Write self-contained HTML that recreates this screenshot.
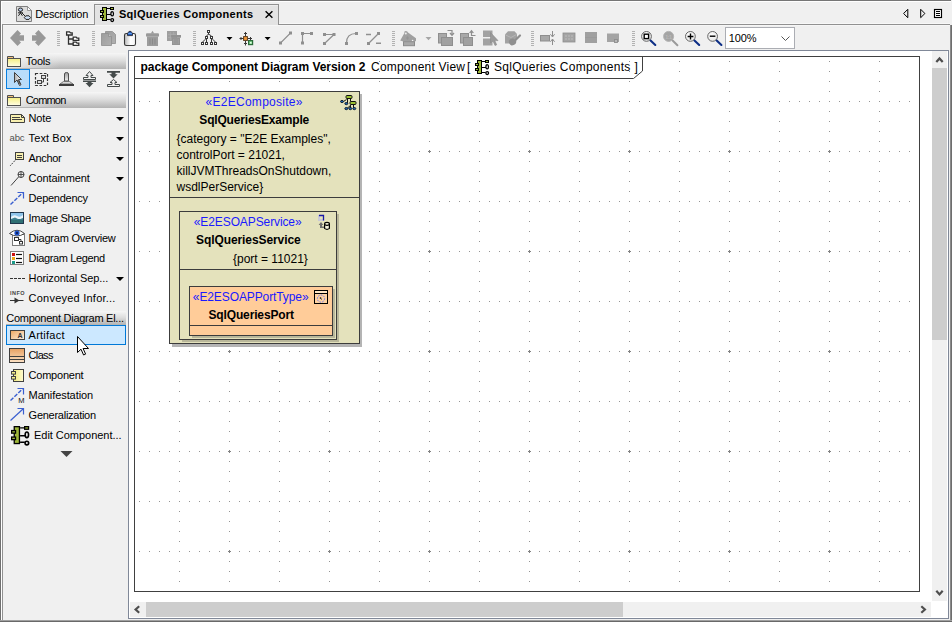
<!DOCTYPE html>
<html><head><meta charset="utf-8"><title>SqlQueries Components</title>
<style>html,body{margin:0;padding:0;background:#f0f0f0;overflow:hidden}svg{display:block;font-family:"Liberation Sans", sans-serif}text{white-space:pre}</style></head>
<body>
<svg width="952" height="622" viewBox="0 0 952 622">
<rect x="0" y="0" width="952" height="622" fill="#f0f0f0" />
<rect x="0" y="0" width="951" height="1" fill="#767676" />
<rect x="0" y="0" width="1" height="622" fill="#707070" />
<rect x="1" y="1" width="950" height="1" fill="#ffffff" />
<rect x="1" y="1" width="1" height="619" fill="#ffffff" />
<rect x="2" y="24" width="1" height="596" fill="#919191" />
<rect x="950" y="25" width="1" height="596" fill="#8a8a8a" />
<rect x="951" y="25" width="1" height="597" fill="#6e6e6e" />
<rect x="0" y="620" width="952" height="1" fill="#a0a0a0" />
<rect x="0" y="621" width="952" height="1" fill="#696969" />
<rect x="3" y="24" width="92" height="1" fill="#919191" />
<rect x="278" y="24" width="672" height="1" fill="#919191" />
<rect x="95" y="5" width="183" height="20" fill="#e3e3e3" />
<rect x="94" y="4" width="185" height="1" fill="#919191" />
<rect x="94" y="4" width="1" height="21" fill="#919191" />
<rect x="278" y="4" width="1" height="21" fill="#919191" />
<rect x="95" y="5" width="183" height="1" fill="#ededed" />
<rect x="3" y="23" width="91" height="1" fill="#f8f8f8" />
<rect x="279" y="23" width="671" height="1" fill="#f8f8f8" />
<rect x="3" y="25" width="947" height="1" fill="#f6f6f6" />
<path d="M265.6 11.3 L272.4 17.7 M272.4 11.3 L265.6 17.7" stroke="#000" stroke-width="1.45" fill="none"/>
<path d="M907.8 9.3 L903.6 13.5 L907.8 17.7 Z" fill="none" stroke="#000" stroke-width="1"/>
<path d="M920.7 9.3 L924.9 13.5 L920.7 17.7 Z" fill="none" stroke="#000" stroke-width="1"/>
<rect x="934.5" y="9.5" width="7" height="8" fill="#fff" stroke="#000" stroke-width="1.15"/>
<path d="M936 11.5h4M936 13.5h4M936 15.5h4" stroke="#000" stroke-width="1"/>
<rect x="128" y="50" width="821" height="569" fill="#808898" />
<rect x="129" y="51" width="819" height="567" fill="#ffffff" />
<rect x="134" y="56" width="786" height="536" fill="#404040" />
<rect x="135" y="57" width="784" height="534" fill="#ffffff" />
<path d="M179 61h1v1h-1zM229 61h1v1h-1zM279 61h1v1h-1zM329 61h1v1h-1zM379 61h1v1h-1zM429 61h1v1h-1zM479 61h1v1h-1zM529 61h1v1h-1zM579 61h1v1h-1zM629 61h1v1h-1zM679 61h1v1h-1zM729 61h1v1h-1zM779 61h1v1h-1zM829 61h1v1h-1zM879 61h1v1h-1zM179 71h1v1h-1zM229 71h1v1h-1zM279 71h1v1h-1zM329 71h1v1h-1zM379 71h1v1h-1zM429 71h1v1h-1zM479 71h1v1h-1zM529 71h1v1h-1zM579 71h1v1h-1zM629 71h1v1h-1zM679 71h1v1h-1zM729 71h1v1h-1zM779 71h1v1h-1zM829 71h1v1h-1zM879 71h1v1h-1zM179 81h1v1h-1zM229 81h1v1h-1zM279 81h1v1h-1zM329 81h1v1h-1zM379 81h1v1h-1zM429 81h1v1h-1zM479 81h1v1h-1zM529 81h1v1h-1zM579 81h1v1h-1zM629 81h1v1h-1zM679 81h1v1h-1zM729 81h1v1h-1zM779 81h1v1h-1zM829 81h1v1h-1zM879 81h1v1h-1zM179 91h1v1h-1zM229 91h1v1h-1zM279 91h1v1h-1zM329 91h1v1h-1zM379 91h1v1h-1zM429 91h1v1h-1zM479 91h1v1h-1zM529 91h1v1h-1zM579 91h1v1h-1zM629 91h1v1h-1zM679 91h1v1h-1zM729 91h1v1h-1zM779 91h1v1h-1zM829 91h1v1h-1zM879 91h1v1h-1zM139 101h1v1h-1zM149 101h1v1h-1zM159 101h1v1h-1zM169 101h1v1h-1zM179 101h1v1h-1zM189 101h1v1h-1zM199 101h1v1h-1zM209 101h1v1h-1zM219 101h1v1h-1zM229 101h1v1h-1zM239 101h1v1h-1zM249 101h1v1h-1zM259 101h1v1h-1zM269 101h1v1h-1zM279 101h1v1h-1zM289 101h1v1h-1zM299 101h1v1h-1zM309 101h1v1h-1zM319 101h1v1h-1zM329 101h1v1h-1zM339 101h1v1h-1zM349 101h1v1h-1zM359 101h1v1h-1zM369 101h1v1h-1zM379 101h1v1h-1zM389 101h1v1h-1zM399 101h1v1h-1zM409 101h1v1h-1zM419 101h1v1h-1zM429 101h1v1h-1zM439 101h1v1h-1zM449 101h1v1h-1zM459 101h1v1h-1zM469 101h1v1h-1zM479 101h1v1h-1zM489 101h1v1h-1zM499 101h1v1h-1zM509 101h1v1h-1zM519 101h1v1h-1zM529 101h1v1h-1zM539 101h1v1h-1zM549 101h1v1h-1zM559 101h1v1h-1zM569 101h1v1h-1zM579 101h1v1h-1zM589 101h1v1h-1zM599 101h1v1h-1zM609 101h1v1h-1zM619 101h1v1h-1zM629 101h1v1h-1zM639 101h1v1h-1zM649 101h1v1h-1zM659 101h1v1h-1zM669 101h1v1h-1zM679 101h1v1h-1zM689 101h1v1h-1zM699 101h1v1h-1zM709 101h1v1h-1zM719 101h1v1h-1zM729 101h1v1h-1zM739 101h1v1h-1zM749 101h1v1h-1zM759 101h1v1h-1zM769 101h1v1h-1zM779 101h1v1h-1zM789 101h1v1h-1zM799 101h1v1h-1zM809 101h1v1h-1zM819 101h1v1h-1zM829 101h1v1h-1zM839 101h1v1h-1zM849 101h1v1h-1zM859 101h1v1h-1zM869 101h1v1h-1zM879 101h1v1h-1zM889 101h1v1h-1zM899 101h1v1h-1zM909 101h1v1h-1zM179 111h1v1h-1zM229 111h1v1h-1zM279 111h1v1h-1zM329 111h1v1h-1zM379 111h1v1h-1zM429 111h1v1h-1zM479 111h1v1h-1zM529 111h1v1h-1zM579 111h1v1h-1zM629 111h1v1h-1zM679 111h1v1h-1zM729 111h1v1h-1zM779 111h1v1h-1zM829 111h1v1h-1zM879 111h1v1h-1zM179 121h1v1h-1zM229 121h1v1h-1zM279 121h1v1h-1zM329 121h1v1h-1zM379 121h1v1h-1zM429 121h1v1h-1zM479 121h1v1h-1zM529 121h1v1h-1zM579 121h1v1h-1zM629 121h1v1h-1zM679 121h1v1h-1zM729 121h1v1h-1zM779 121h1v1h-1zM829 121h1v1h-1zM879 121h1v1h-1zM179 131h1v1h-1zM229 131h1v1h-1zM279 131h1v1h-1zM329 131h1v1h-1zM379 131h1v1h-1zM429 131h1v1h-1zM479 131h1v1h-1zM529 131h1v1h-1zM579 131h1v1h-1zM629 131h1v1h-1zM679 131h1v1h-1zM729 131h1v1h-1zM779 131h1v1h-1zM829 131h1v1h-1zM879 131h1v1h-1zM179 141h1v1h-1zM229 141h1v1h-1zM279 141h1v1h-1zM329 141h1v1h-1zM379 141h1v1h-1zM429 141h1v1h-1zM479 141h1v1h-1zM529 141h1v1h-1zM579 141h1v1h-1zM629 141h1v1h-1zM679 141h1v1h-1zM729 141h1v1h-1zM779 141h1v1h-1zM829 141h1v1h-1zM879 141h1v1h-1zM139 151h1v1h-1zM149 151h1v1h-1zM159 151h1v1h-1zM169 151h1v1h-1zM179 151h1v1h-1zM189 151h1v1h-1zM199 151h1v1h-1zM209 151h1v1h-1zM219 151h1v1h-1zM229 151h1v1h-1zM239 151h1v1h-1zM249 151h1v1h-1zM259 151h1v1h-1zM269 151h1v1h-1zM279 151h1v1h-1zM289 151h1v1h-1zM299 151h1v1h-1zM309 151h1v1h-1zM319 151h1v1h-1zM329 151h1v1h-1zM339 151h1v1h-1zM349 151h1v1h-1zM359 151h1v1h-1zM369 151h1v1h-1zM379 151h1v1h-1zM389 151h1v1h-1zM399 151h1v1h-1zM409 151h1v1h-1zM419 151h1v1h-1zM429 151h1v1h-1zM439 151h1v1h-1zM449 151h1v1h-1zM459 151h1v1h-1zM469 151h1v1h-1zM479 151h1v1h-1zM489 151h1v1h-1zM499 151h1v1h-1zM509 151h1v1h-1zM519 151h1v1h-1zM529 151h1v1h-1zM539 151h1v1h-1zM549 151h1v1h-1zM559 151h1v1h-1zM569 151h1v1h-1zM579 151h1v1h-1zM589 151h1v1h-1zM599 151h1v1h-1zM609 151h1v1h-1zM619 151h1v1h-1zM629 151h1v1h-1zM639 151h1v1h-1zM649 151h1v1h-1zM659 151h1v1h-1zM669 151h1v1h-1zM679 151h1v1h-1zM689 151h1v1h-1zM699 151h1v1h-1zM709 151h1v1h-1zM719 151h1v1h-1zM729 151h1v1h-1zM739 151h1v1h-1zM749 151h1v1h-1zM759 151h1v1h-1zM769 151h1v1h-1zM779 151h1v1h-1zM789 151h1v1h-1zM799 151h1v1h-1zM809 151h1v1h-1zM819 151h1v1h-1zM829 151h1v1h-1zM839 151h1v1h-1zM849 151h1v1h-1zM859 151h1v1h-1zM869 151h1v1h-1zM879 151h1v1h-1zM889 151h1v1h-1zM899 151h1v1h-1zM909 151h1v1h-1zM179 161h1v1h-1zM229 161h1v1h-1zM279 161h1v1h-1zM329 161h1v1h-1zM379 161h1v1h-1zM429 161h1v1h-1zM479 161h1v1h-1zM529 161h1v1h-1zM579 161h1v1h-1zM629 161h1v1h-1zM679 161h1v1h-1zM729 161h1v1h-1zM779 161h1v1h-1zM829 161h1v1h-1zM879 161h1v1h-1zM179 171h1v1h-1zM229 171h1v1h-1zM279 171h1v1h-1zM329 171h1v1h-1zM379 171h1v1h-1zM429 171h1v1h-1zM479 171h1v1h-1zM529 171h1v1h-1zM579 171h1v1h-1zM629 171h1v1h-1zM679 171h1v1h-1zM729 171h1v1h-1zM779 171h1v1h-1zM829 171h1v1h-1zM879 171h1v1h-1zM179 181h1v1h-1zM229 181h1v1h-1zM279 181h1v1h-1zM329 181h1v1h-1zM379 181h1v1h-1zM429 181h1v1h-1zM479 181h1v1h-1zM529 181h1v1h-1zM579 181h1v1h-1zM629 181h1v1h-1zM679 181h1v1h-1zM729 181h1v1h-1zM779 181h1v1h-1zM829 181h1v1h-1zM879 181h1v1h-1zM179 191h1v1h-1zM229 191h1v1h-1zM279 191h1v1h-1zM329 191h1v1h-1zM379 191h1v1h-1zM429 191h1v1h-1zM479 191h1v1h-1zM529 191h1v1h-1zM579 191h1v1h-1zM629 191h1v1h-1zM679 191h1v1h-1zM729 191h1v1h-1zM779 191h1v1h-1zM829 191h1v1h-1zM879 191h1v1h-1zM139 201h1v1h-1zM149 201h1v1h-1zM159 201h1v1h-1zM169 201h1v1h-1zM179 201h1v1h-1zM189 201h1v1h-1zM199 201h1v1h-1zM209 201h1v1h-1zM219 201h1v1h-1zM229 201h1v1h-1zM239 201h1v1h-1zM249 201h1v1h-1zM259 201h1v1h-1zM269 201h1v1h-1zM279 201h1v1h-1zM289 201h1v1h-1zM299 201h1v1h-1zM309 201h1v1h-1zM319 201h1v1h-1zM329 201h1v1h-1zM339 201h1v1h-1zM349 201h1v1h-1zM359 201h1v1h-1zM369 201h1v1h-1zM379 201h1v1h-1zM389 201h1v1h-1zM399 201h1v1h-1zM409 201h1v1h-1zM419 201h1v1h-1zM429 201h1v1h-1zM439 201h1v1h-1zM449 201h1v1h-1zM459 201h1v1h-1zM469 201h1v1h-1zM479 201h1v1h-1zM489 201h1v1h-1zM499 201h1v1h-1zM509 201h1v1h-1zM519 201h1v1h-1zM529 201h1v1h-1zM539 201h1v1h-1zM549 201h1v1h-1zM559 201h1v1h-1zM569 201h1v1h-1zM579 201h1v1h-1zM589 201h1v1h-1zM599 201h1v1h-1zM609 201h1v1h-1zM619 201h1v1h-1zM629 201h1v1h-1zM639 201h1v1h-1zM649 201h1v1h-1zM659 201h1v1h-1zM669 201h1v1h-1zM679 201h1v1h-1zM689 201h1v1h-1zM699 201h1v1h-1zM709 201h1v1h-1zM719 201h1v1h-1zM729 201h1v1h-1zM739 201h1v1h-1zM749 201h1v1h-1zM759 201h1v1h-1zM769 201h1v1h-1zM779 201h1v1h-1zM789 201h1v1h-1zM799 201h1v1h-1zM809 201h1v1h-1zM819 201h1v1h-1zM829 201h1v1h-1zM839 201h1v1h-1zM849 201h1v1h-1zM859 201h1v1h-1zM869 201h1v1h-1zM879 201h1v1h-1zM889 201h1v1h-1zM899 201h1v1h-1zM909 201h1v1h-1zM179 211h1v1h-1zM229 211h1v1h-1zM279 211h1v1h-1zM329 211h1v1h-1zM379 211h1v1h-1zM429 211h1v1h-1zM479 211h1v1h-1zM529 211h1v1h-1zM579 211h1v1h-1zM629 211h1v1h-1zM679 211h1v1h-1zM729 211h1v1h-1zM779 211h1v1h-1zM829 211h1v1h-1zM879 211h1v1h-1zM179 221h1v1h-1zM229 221h1v1h-1zM279 221h1v1h-1zM329 221h1v1h-1zM379 221h1v1h-1zM429 221h1v1h-1zM479 221h1v1h-1zM529 221h1v1h-1zM579 221h1v1h-1zM629 221h1v1h-1zM679 221h1v1h-1zM729 221h1v1h-1zM779 221h1v1h-1zM829 221h1v1h-1zM879 221h1v1h-1zM179 231h1v1h-1zM229 231h1v1h-1zM279 231h1v1h-1zM329 231h1v1h-1zM379 231h1v1h-1zM429 231h1v1h-1zM479 231h1v1h-1zM529 231h1v1h-1zM579 231h1v1h-1zM629 231h1v1h-1zM679 231h1v1h-1zM729 231h1v1h-1zM779 231h1v1h-1zM829 231h1v1h-1zM879 231h1v1h-1zM179 241h1v1h-1zM229 241h1v1h-1zM279 241h1v1h-1zM329 241h1v1h-1zM379 241h1v1h-1zM429 241h1v1h-1zM479 241h1v1h-1zM529 241h1v1h-1zM579 241h1v1h-1zM629 241h1v1h-1zM679 241h1v1h-1zM729 241h1v1h-1zM779 241h1v1h-1zM829 241h1v1h-1zM879 241h1v1h-1zM139 251h1v1h-1zM149 251h1v1h-1zM159 251h1v1h-1zM169 251h1v1h-1zM179 251h1v1h-1zM189 251h1v1h-1zM199 251h1v1h-1zM209 251h1v1h-1zM219 251h1v1h-1zM229 251h1v1h-1zM239 251h1v1h-1zM249 251h1v1h-1zM259 251h1v1h-1zM269 251h1v1h-1zM279 251h1v1h-1zM289 251h1v1h-1zM299 251h1v1h-1zM309 251h1v1h-1zM319 251h1v1h-1zM329 251h1v1h-1zM339 251h1v1h-1zM349 251h1v1h-1zM359 251h1v1h-1zM369 251h1v1h-1zM379 251h1v1h-1zM389 251h1v1h-1zM399 251h1v1h-1zM409 251h1v1h-1zM419 251h1v1h-1zM429 251h1v1h-1zM439 251h1v1h-1zM449 251h1v1h-1zM459 251h1v1h-1zM469 251h1v1h-1zM479 251h1v1h-1zM489 251h1v1h-1zM499 251h1v1h-1zM509 251h1v1h-1zM519 251h1v1h-1zM529 251h1v1h-1zM539 251h1v1h-1zM549 251h1v1h-1zM559 251h1v1h-1zM569 251h1v1h-1zM579 251h1v1h-1zM589 251h1v1h-1zM599 251h1v1h-1zM609 251h1v1h-1zM619 251h1v1h-1zM629 251h1v1h-1zM639 251h1v1h-1zM649 251h1v1h-1zM659 251h1v1h-1zM669 251h1v1h-1zM679 251h1v1h-1zM689 251h1v1h-1zM699 251h1v1h-1zM709 251h1v1h-1zM719 251h1v1h-1zM729 251h1v1h-1zM739 251h1v1h-1zM749 251h1v1h-1zM759 251h1v1h-1zM769 251h1v1h-1zM779 251h1v1h-1zM789 251h1v1h-1zM799 251h1v1h-1zM809 251h1v1h-1zM819 251h1v1h-1zM829 251h1v1h-1zM839 251h1v1h-1zM849 251h1v1h-1zM859 251h1v1h-1zM869 251h1v1h-1zM879 251h1v1h-1zM889 251h1v1h-1zM899 251h1v1h-1zM909 251h1v1h-1zM179 261h1v1h-1zM229 261h1v1h-1zM279 261h1v1h-1zM329 261h1v1h-1zM379 261h1v1h-1zM429 261h1v1h-1zM479 261h1v1h-1zM529 261h1v1h-1zM579 261h1v1h-1zM629 261h1v1h-1zM679 261h1v1h-1zM729 261h1v1h-1zM779 261h1v1h-1zM829 261h1v1h-1zM879 261h1v1h-1zM179 271h1v1h-1zM229 271h1v1h-1zM279 271h1v1h-1zM329 271h1v1h-1zM379 271h1v1h-1zM429 271h1v1h-1zM479 271h1v1h-1zM529 271h1v1h-1zM579 271h1v1h-1zM629 271h1v1h-1zM679 271h1v1h-1zM729 271h1v1h-1zM779 271h1v1h-1zM829 271h1v1h-1zM879 271h1v1h-1zM179 281h1v1h-1zM229 281h1v1h-1zM279 281h1v1h-1zM329 281h1v1h-1zM379 281h1v1h-1zM429 281h1v1h-1zM479 281h1v1h-1zM529 281h1v1h-1zM579 281h1v1h-1zM629 281h1v1h-1zM679 281h1v1h-1zM729 281h1v1h-1zM779 281h1v1h-1zM829 281h1v1h-1zM879 281h1v1h-1zM179 291h1v1h-1zM229 291h1v1h-1zM279 291h1v1h-1zM329 291h1v1h-1zM379 291h1v1h-1zM429 291h1v1h-1zM479 291h1v1h-1zM529 291h1v1h-1zM579 291h1v1h-1zM629 291h1v1h-1zM679 291h1v1h-1zM729 291h1v1h-1zM779 291h1v1h-1zM829 291h1v1h-1zM879 291h1v1h-1zM139 301h1v1h-1zM149 301h1v1h-1zM159 301h1v1h-1zM169 301h1v1h-1zM179 301h1v1h-1zM189 301h1v1h-1zM199 301h1v1h-1zM209 301h1v1h-1zM219 301h1v1h-1zM229 301h1v1h-1zM239 301h1v1h-1zM249 301h1v1h-1zM259 301h1v1h-1zM269 301h1v1h-1zM279 301h1v1h-1zM289 301h1v1h-1zM299 301h1v1h-1zM309 301h1v1h-1zM319 301h1v1h-1zM329 301h1v1h-1zM339 301h1v1h-1zM349 301h1v1h-1zM359 301h1v1h-1zM369 301h1v1h-1zM379 301h1v1h-1zM389 301h1v1h-1zM399 301h1v1h-1zM409 301h1v1h-1zM419 301h1v1h-1zM429 301h1v1h-1zM439 301h1v1h-1zM449 301h1v1h-1zM459 301h1v1h-1zM469 301h1v1h-1zM479 301h1v1h-1zM489 301h1v1h-1zM499 301h1v1h-1zM509 301h1v1h-1zM519 301h1v1h-1zM529 301h1v1h-1zM539 301h1v1h-1zM549 301h1v1h-1zM559 301h1v1h-1zM569 301h1v1h-1zM579 301h1v1h-1zM589 301h1v1h-1zM599 301h1v1h-1zM609 301h1v1h-1zM619 301h1v1h-1zM629 301h1v1h-1zM639 301h1v1h-1zM649 301h1v1h-1zM659 301h1v1h-1zM669 301h1v1h-1zM679 301h1v1h-1zM689 301h1v1h-1zM699 301h1v1h-1zM709 301h1v1h-1zM719 301h1v1h-1zM729 301h1v1h-1zM739 301h1v1h-1zM749 301h1v1h-1zM759 301h1v1h-1zM769 301h1v1h-1zM779 301h1v1h-1zM789 301h1v1h-1zM799 301h1v1h-1zM809 301h1v1h-1zM819 301h1v1h-1zM829 301h1v1h-1zM839 301h1v1h-1zM849 301h1v1h-1zM859 301h1v1h-1zM869 301h1v1h-1zM879 301h1v1h-1zM889 301h1v1h-1zM899 301h1v1h-1zM909 301h1v1h-1zM179 311h1v1h-1zM229 311h1v1h-1zM279 311h1v1h-1zM329 311h1v1h-1zM379 311h1v1h-1zM429 311h1v1h-1zM479 311h1v1h-1zM529 311h1v1h-1zM579 311h1v1h-1zM629 311h1v1h-1zM679 311h1v1h-1zM729 311h1v1h-1zM779 311h1v1h-1zM829 311h1v1h-1zM879 311h1v1h-1zM179 321h1v1h-1zM229 321h1v1h-1zM279 321h1v1h-1zM329 321h1v1h-1zM379 321h1v1h-1zM429 321h1v1h-1zM479 321h1v1h-1zM529 321h1v1h-1zM579 321h1v1h-1zM629 321h1v1h-1zM679 321h1v1h-1zM729 321h1v1h-1zM779 321h1v1h-1zM829 321h1v1h-1zM879 321h1v1h-1zM179 331h1v1h-1zM229 331h1v1h-1zM279 331h1v1h-1zM329 331h1v1h-1zM379 331h1v1h-1zM429 331h1v1h-1zM479 331h1v1h-1zM529 331h1v1h-1zM579 331h1v1h-1zM629 331h1v1h-1zM679 331h1v1h-1zM729 331h1v1h-1zM779 331h1v1h-1zM829 331h1v1h-1zM879 331h1v1h-1zM179 341h1v1h-1zM229 341h1v1h-1zM279 341h1v1h-1zM329 341h1v1h-1zM379 341h1v1h-1zM429 341h1v1h-1zM479 341h1v1h-1zM529 341h1v1h-1zM579 341h1v1h-1zM629 341h1v1h-1zM679 341h1v1h-1zM729 341h1v1h-1zM779 341h1v1h-1zM829 341h1v1h-1zM879 341h1v1h-1zM139 351h1v1h-1zM149 351h1v1h-1zM159 351h1v1h-1zM169 351h1v1h-1zM179 351h1v1h-1zM189 351h1v1h-1zM199 351h1v1h-1zM209 351h1v1h-1zM219 351h1v1h-1zM229 351h1v1h-1zM239 351h1v1h-1zM249 351h1v1h-1zM259 351h1v1h-1zM269 351h1v1h-1zM279 351h1v1h-1zM289 351h1v1h-1zM299 351h1v1h-1zM309 351h1v1h-1zM319 351h1v1h-1zM329 351h1v1h-1zM339 351h1v1h-1zM349 351h1v1h-1zM359 351h1v1h-1zM369 351h1v1h-1zM379 351h1v1h-1zM389 351h1v1h-1zM399 351h1v1h-1zM409 351h1v1h-1zM419 351h1v1h-1zM429 351h1v1h-1zM439 351h1v1h-1zM449 351h1v1h-1zM459 351h1v1h-1zM469 351h1v1h-1zM479 351h1v1h-1zM489 351h1v1h-1zM499 351h1v1h-1zM509 351h1v1h-1zM519 351h1v1h-1zM529 351h1v1h-1zM539 351h1v1h-1zM549 351h1v1h-1zM559 351h1v1h-1zM569 351h1v1h-1zM579 351h1v1h-1zM589 351h1v1h-1zM599 351h1v1h-1zM609 351h1v1h-1zM619 351h1v1h-1zM629 351h1v1h-1zM639 351h1v1h-1zM649 351h1v1h-1zM659 351h1v1h-1zM669 351h1v1h-1zM679 351h1v1h-1zM689 351h1v1h-1zM699 351h1v1h-1zM709 351h1v1h-1zM719 351h1v1h-1zM729 351h1v1h-1zM739 351h1v1h-1zM749 351h1v1h-1zM759 351h1v1h-1zM769 351h1v1h-1zM779 351h1v1h-1zM789 351h1v1h-1zM799 351h1v1h-1zM809 351h1v1h-1zM819 351h1v1h-1zM829 351h1v1h-1zM839 351h1v1h-1zM849 351h1v1h-1zM859 351h1v1h-1zM869 351h1v1h-1zM879 351h1v1h-1zM889 351h1v1h-1zM899 351h1v1h-1zM909 351h1v1h-1zM179 361h1v1h-1zM229 361h1v1h-1zM279 361h1v1h-1zM329 361h1v1h-1zM379 361h1v1h-1zM429 361h1v1h-1zM479 361h1v1h-1zM529 361h1v1h-1zM579 361h1v1h-1zM629 361h1v1h-1zM679 361h1v1h-1zM729 361h1v1h-1zM779 361h1v1h-1zM829 361h1v1h-1zM879 361h1v1h-1zM179 371h1v1h-1zM229 371h1v1h-1zM279 371h1v1h-1zM329 371h1v1h-1zM379 371h1v1h-1zM429 371h1v1h-1zM479 371h1v1h-1zM529 371h1v1h-1zM579 371h1v1h-1zM629 371h1v1h-1zM679 371h1v1h-1zM729 371h1v1h-1zM779 371h1v1h-1zM829 371h1v1h-1zM879 371h1v1h-1zM179 381h1v1h-1zM229 381h1v1h-1zM279 381h1v1h-1zM329 381h1v1h-1zM379 381h1v1h-1zM429 381h1v1h-1zM479 381h1v1h-1zM529 381h1v1h-1zM579 381h1v1h-1zM629 381h1v1h-1zM679 381h1v1h-1zM729 381h1v1h-1zM779 381h1v1h-1zM829 381h1v1h-1zM879 381h1v1h-1zM179 391h1v1h-1zM229 391h1v1h-1zM279 391h1v1h-1zM329 391h1v1h-1zM379 391h1v1h-1zM429 391h1v1h-1zM479 391h1v1h-1zM529 391h1v1h-1zM579 391h1v1h-1zM629 391h1v1h-1zM679 391h1v1h-1zM729 391h1v1h-1zM779 391h1v1h-1zM829 391h1v1h-1zM879 391h1v1h-1zM139 401h1v1h-1zM149 401h1v1h-1zM159 401h1v1h-1zM169 401h1v1h-1zM179 401h1v1h-1zM189 401h1v1h-1zM199 401h1v1h-1zM209 401h1v1h-1zM219 401h1v1h-1zM229 401h1v1h-1zM239 401h1v1h-1zM249 401h1v1h-1zM259 401h1v1h-1zM269 401h1v1h-1zM279 401h1v1h-1zM289 401h1v1h-1zM299 401h1v1h-1zM309 401h1v1h-1zM319 401h1v1h-1zM329 401h1v1h-1zM339 401h1v1h-1zM349 401h1v1h-1zM359 401h1v1h-1zM369 401h1v1h-1zM379 401h1v1h-1zM389 401h1v1h-1zM399 401h1v1h-1zM409 401h1v1h-1zM419 401h1v1h-1zM429 401h1v1h-1zM439 401h1v1h-1zM449 401h1v1h-1zM459 401h1v1h-1zM469 401h1v1h-1zM479 401h1v1h-1zM489 401h1v1h-1zM499 401h1v1h-1zM509 401h1v1h-1zM519 401h1v1h-1zM529 401h1v1h-1zM539 401h1v1h-1zM549 401h1v1h-1zM559 401h1v1h-1zM569 401h1v1h-1zM579 401h1v1h-1zM589 401h1v1h-1zM599 401h1v1h-1zM609 401h1v1h-1zM619 401h1v1h-1zM629 401h1v1h-1zM639 401h1v1h-1zM649 401h1v1h-1zM659 401h1v1h-1zM669 401h1v1h-1zM679 401h1v1h-1zM689 401h1v1h-1zM699 401h1v1h-1zM709 401h1v1h-1zM719 401h1v1h-1zM729 401h1v1h-1zM739 401h1v1h-1zM749 401h1v1h-1zM759 401h1v1h-1zM769 401h1v1h-1zM779 401h1v1h-1zM789 401h1v1h-1zM799 401h1v1h-1zM809 401h1v1h-1zM819 401h1v1h-1zM829 401h1v1h-1zM839 401h1v1h-1zM849 401h1v1h-1zM859 401h1v1h-1zM869 401h1v1h-1zM879 401h1v1h-1zM889 401h1v1h-1zM899 401h1v1h-1zM909 401h1v1h-1zM179 411h1v1h-1zM229 411h1v1h-1zM279 411h1v1h-1zM329 411h1v1h-1zM379 411h1v1h-1zM429 411h1v1h-1zM479 411h1v1h-1zM529 411h1v1h-1zM579 411h1v1h-1zM629 411h1v1h-1zM679 411h1v1h-1zM729 411h1v1h-1zM779 411h1v1h-1zM829 411h1v1h-1zM879 411h1v1h-1zM179 421h1v1h-1zM229 421h1v1h-1zM279 421h1v1h-1zM329 421h1v1h-1zM379 421h1v1h-1zM429 421h1v1h-1zM479 421h1v1h-1zM529 421h1v1h-1zM579 421h1v1h-1zM629 421h1v1h-1zM679 421h1v1h-1zM729 421h1v1h-1zM779 421h1v1h-1zM829 421h1v1h-1zM879 421h1v1h-1zM179 431h1v1h-1zM229 431h1v1h-1zM279 431h1v1h-1zM329 431h1v1h-1zM379 431h1v1h-1zM429 431h1v1h-1zM479 431h1v1h-1zM529 431h1v1h-1zM579 431h1v1h-1zM629 431h1v1h-1zM679 431h1v1h-1zM729 431h1v1h-1zM779 431h1v1h-1zM829 431h1v1h-1zM879 431h1v1h-1zM179 441h1v1h-1zM229 441h1v1h-1zM279 441h1v1h-1zM329 441h1v1h-1zM379 441h1v1h-1zM429 441h1v1h-1zM479 441h1v1h-1zM529 441h1v1h-1zM579 441h1v1h-1zM629 441h1v1h-1zM679 441h1v1h-1zM729 441h1v1h-1zM779 441h1v1h-1zM829 441h1v1h-1zM879 441h1v1h-1zM139 451h1v1h-1zM149 451h1v1h-1zM159 451h1v1h-1zM169 451h1v1h-1zM179 451h1v1h-1zM189 451h1v1h-1zM199 451h1v1h-1zM209 451h1v1h-1zM219 451h1v1h-1zM229 451h1v1h-1zM239 451h1v1h-1zM249 451h1v1h-1zM259 451h1v1h-1zM269 451h1v1h-1zM279 451h1v1h-1zM289 451h1v1h-1zM299 451h1v1h-1zM309 451h1v1h-1zM319 451h1v1h-1zM329 451h1v1h-1zM339 451h1v1h-1zM349 451h1v1h-1zM359 451h1v1h-1zM369 451h1v1h-1zM379 451h1v1h-1zM389 451h1v1h-1zM399 451h1v1h-1zM409 451h1v1h-1zM419 451h1v1h-1zM429 451h1v1h-1zM439 451h1v1h-1zM449 451h1v1h-1zM459 451h1v1h-1zM469 451h1v1h-1zM479 451h1v1h-1zM489 451h1v1h-1zM499 451h1v1h-1zM509 451h1v1h-1zM519 451h1v1h-1zM529 451h1v1h-1zM539 451h1v1h-1zM549 451h1v1h-1zM559 451h1v1h-1zM569 451h1v1h-1zM579 451h1v1h-1zM589 451h1v1h-1zM599 451h1v1h-1zM609 451h1v1h-1zM619 451h1v1h-1zM629 451h1v1h-1zM639 451h1v1h-1zM649 451h1v1h-1zM659 451h1v1h-1zM669 451h1v1h-1zM679 451h1v1h-1zM689 451h1v1h-1zM699 451h1v1h-1zM709 451h1v1h-1zM719 451h1v1h-1zM729 451h1v1h-1zM739 451h1v1h-1zM749 451h1v1h-1zM759 451h1v1h-1zM769 451h1v1h-1zM779 451h1v1h-1zM789 451h1v1h-1zM799 451h1v1h-1zM809 451h1v1h-1zM819 451h1v1h-1zM829 451h1v1h-1zM839 451h1v1h-1zM849 451h1v1h-1zM859 451h1v1h-1zM869 451h1v1h-1zM879 451h1v1h-1zM889 451h1v1h-1zM899 451h1v1h-1zM909 451h1v1h-1zM179 461h1v1h-1zM229 461h1v1h-1zM279 461h1v1h-1zM329 461h1v1h-1zM379 461h1v1h-1zM429 461h1v1h-1zM479 461h1v1h-1zM529 461h1v1h-1zM579 461h1v1h-1zM629 461h1v1h-1zM679 461h1v1h-1zM729 461h1v1h-1zM779 461h1v1h-1zM829 461h1v1h-1zM879 461h1v1h-1zM179 471h1v1h-1zM229 471h1v1h-1zM279 471h1v1h-1zM329 471h1v1h-1zM379 471h1v1h-1zM429 471h1v1h-1zM479 471h1v1h-1zM529 471h1v1h-1zM579 471h1v1h-1zM629 471h1v1h-1zM679 471h1v1h-1zM729 471h1v1h-1zM779 471h1v1h-1zM829 471h1v1h-1zM879 471h1v1h-1zM179 481h1v1h-1zM229 481h1v1h-1zM279 481h1v1h-1zM329 481h1v1h-1zM379 481h1v1h-1zM429 481h1v1h-1zM479 481h1v1h-1zM529 481h1v1h-1zM579 481h1v1h-1zM629 481h1v1h-1zM679 481h1v1h-1zM729 481h1v1h-1zM779 481h1v1h-1zM829 481h1v1h-1zM879 481h1v1h-1zM179 491h1v1h-1zM229 491h1v1h-1zM279 491h1v1h-1zM329 491h1v1h-1zM379 491h1v1h-1zM429 491h1v1h-1zM479 491h1v1h-1zM529 491h1v1h-1zM579 491h1v1h-1zM629 491h1v1h-1zM679 491h1v1h-1zM729 491h1v1h-1zM779 491h1v1h-1zM829 491h1v1h-1zM879 491h1v1h-1zM139 501h1v1h-1zM149 501h1v1h-1zM159 501h1v1h-1zM169 501h1v1h-1zM179 501h1v1h-1zM189 501h1v1h-1zM199 501h1v1h-1zM209 501h1v1h-1zM219 501h1v1h-1zM229 501h1v1h-1zM239 501h1v1h-1zM249 501h1v1h-1zM259 501h1v1h-1zM269 501h1v1h-1zM279 501h1v1h-1zM289 501h1v1h-1zM299 501h1v1h-1zM309 501h1v1h-1zM319 501h1v1h-1zM329 501h1v1h-1zM339 501h1v1h-1zM349 501h1v1h-1zM359 501h1v1h-1zM369 501h1v1h-1zM379 501h1v1h-1zM389 501h1v1h-1zM399 501h1v1h-1zM409 501h1v1h-1zM419 501h1v1h-1zM429 501h1v1h-1zM439 501h1v1h-1zM449 501h1v1h-1zM459 501h1v1h-1zM469 501h1v1h-1zM479 501h1v1h-1zM489 501h1v1h-1zM499 501h1v1h-1zM509 501h1v1h-1zM519 501h1v1h-1zM529 501h1v1h-1zM539 501h1v1h-1zM549 501h1v1h-1zM559 501h1v1h-1zM569 501h1v1h-1zM579 501h1v1h-1zM589 501h1v1h-1zM599 501h1v1h-1zM609 501h1v1h-1zM619 501h1v1h-1zM629 501h1v1h-1zM639 501h1v1h-1zM649 501h1v1h-1zM659 501h1v1h-1zM669 501h1v1h-1zM679 501h1v1h-1zM689 501h1v1h-1zM699 501h1v1h-1zM709 501h1v1h-1zM719 501h1v1h-1zM729 501h1v1h-1zM739 501h1v1h-1zM749 501h1v1h-1zM759 501h1v1h-1zM769 501h1v1h-1zM779 501h1v1h-1zM789 501h1v1h-1zM799 501h1v1h-1zM809 501h1v1h-1zM819 501h1v1h-1zM829 501h1v1h-1zM839 501h1v1h-1zM849 501h1v1h-1zM859 501h1v1h-1zM869 501h1v1h-1zM879 501h1v1h-1zM889 501h1v1h-1zM899 501h1v1h-1zM909 501h1v1h-1zM179 511h1v1h-1zM229 511h1v1h-1zM279 511h1v1h-1zM329 511h1v1h-1zM379 511h1v1h-1zM429 511h1v1h-1zM479 511h1v1h-1zM529 511h1v1h-1zM579 511h1v1h-1zM629 511h1v1h-1zM679 511h1v1h-1zM729 511h1v1h-1zM779 511h1v1h-1zM829 511h1v1h-1zM879 511h1v1h-1zM179 521h1v1h-1zM229 521h1v1h-1zM279 521h1v1h-1zM329 521h1v1h-1zM379 521h1v1h-1zM429 521h1v1h-1zM479 521h1v1h-1zM529 521h1v1h-1zM579 521h1v1h-1zM629 521h1v1h-1zM679 521h1v1h-1zM729 521h1v1h-1zM779 521h1v1h-1zM829 521h1v1h-1zM879 521h1v1h-1zM179 531h1v1h-1zM229 531h1v1h-1zM279 531h1v1h-1zM329 531h1v1h-1zM379 531h1v1h-1zM429 531h1v1h-1zM479 531h1v1h-1zM529 531h1v1h-1zM579 531h1v1h-1zM629 531h1v1h-1zM679 531h1v1h-1zM729 531h1v1h-1zM779 531h1v1h-1zM829 531h1v1h-1zM879 531h1v1h-1zM179 541h1v1h-1zM229 541h1v1h-1zM279 541h1v1h-1zM329 541h1v1h-1zM379 541h1v1h-1zM429 541h1v1h-1zM479 541h1v1h-1zM529 541h1v1h-1zM579 541h1v1h-1zM629 541h1v1h-1zM679 541h1v1h-1zM729 541h1v1h-1zM779 541h1v1h-1zM829 541h1v1h-1zM879 541h1v1h-1zM139 551h1v1h-1zM149 551h1v1h-1zM159 551h1v1h-1zM169 551h1v1h-1zM179 551h1v1h-1zM189 551h1v1h-1zM199 551h1v1h-1zM209 551h1v1h-1zM219 551h1v1h-1zM229 551h1v1h-1zM239 551h1v1h-1zM249 551h1v1h-1zM259 551h1v1h-1zM269 551h1v1h-1zM279 551h1v1h-1zM289 551h1v1h-1zM299 551h1v1h-1zM309 551h1v1h-1zM319 551h1v1h-1zM329 551h1v1h-1zM339 551h1v1h-1zM349 551h1v1h-1zM359 551h1v1h-1zM369 551h1v1h-1zM379 551h1v1h-1zM389 551h1v1h-1zM399 551h1v1h-1zM409 551h1v1h-1zM419 551h1v1h-1zM429 551h1v1h-1zM439 551h1v1h-1zM449 551h1v1h-1zM459 551h1v1h-1zM469 551h1v1h-1zM479 551h1v1h-1zM489 551h1v1h-1zM499 551h1v1h-1zM509 551h1v1h-1zM519 551h1v1h-1zM529 551h1v1h-1zM539 551h1v1h-1zM549 551h1v1h-1zM559 551h1v1h-1zM569 551h1v1h-1zM579 551h1v1h-1zM589 551h1v1h-1zM599 551h1v1h-1zM609 551h1v1h-1zM619 551h1v1h-1zM629 551h1v1h-1zM639 551h1v1h-1zM649 551h1v1h-1zM659 551h1v1h-1zM669 551h1v1h-1zM679 551h1v1h-1zM689 551h1v1h-1zM699 551h1v1h-1zM709 551h1v1h-1zM719 551h1v1h-1zM729 551h1v1h-1zM739 551h1v1h-1zM749 551h1v1h-1zM759 551h1v1h-1zM769 551h1v1h-1zM779 551h1v1h-1zM789 551h1v1h-1zM799 551h1v1h-1zM809 551h1v1h-1zM819 551h1v1h-1zM829 551h1v1h-1zM839 551h1v1h-1zM849 551h1v1h-1zM859 551h1v1h-1zM869 551h1v1h-1zM879 551h1v1h-1zM889 551h1v1h-1zM899 551h1v1h-1zM909 551h1v1h-1zM179 561h1v1h-1zM229 561h1v1h-1zM279 561h1v1h-1zM329 561h1v1h-1zM379 561h1v1h-1zM429 561h1v1h-1zM479 561h1v1h-1zM529 561h1v1h-1zM579 561h1v1h-1zM629 561h1v1h-1zM679 561h1v1h-1zM729 561h1v1h-1zM779 561h1v1h-1zM829 561h1v1h-1zM879 561h1v1h-1zM179 571h1v1h-1zM229 571h1v1h-1zM279 571h1v1h-1zM329 571h1v1h-1zM379 571h1v1h-1zM429 571h1v1h-1zM479 571h1v1h-1zM529 571h1v1h-1zM579 571h1v1h-1zM629 571h1v1h-1zM679 571h1v1h-1zM729 571h1v1h-1zM779 571h1v1h-1zM829 571h1v1h-1zM879 571h1v1h-1zM179 581h1v1h-1zM229 581h1v1h-1zM279 581h1v1h-1zM329 581h1v1h-1zM379 581h1v1h-1zM429 581h1v1h-1zM479 581h1v1h-1zM529 581h1v1h-1zM579 581h1v1h-1zM629 581h1v1h-1zM679 581h1v1h-1zM729 581h1v1h-1zM779 581h1v1h-1zM829 581h1v1h-1zM879 581h1v1h-1z" fill="#949494" shape-rendering="crispEdges"/>
<path d="M228 151h3v1h-3zM229 150h1v3h-1zM328 151h3v1h-3zM329 150h1v3h-1zM428 151h3v1h-3zM429 150h1v3h-1zM528 151h3v1h-3zM529 150h1v3h-1zM628 151h3v1h-3zM629 150h1v3h-1zM728 151h3v1h-3zM729 150h1v3h-1zM828 151h3v1h-3zM829 150h1v3h-1zM228 251h3v1h-3zM229 250h1v3h-1zM328 251h3v1h-3zM329 250h1v3h-1zM428 251h3v1h-3zM429 250h1v3h-1zM528 251h3v1h-3zM529 250h1v3h-1zM628 251h3v1h-3zM629 250h1v3h-1zM728 251h3v1h-3zM729 250h1v3h-1zM828 251h3v1h-3zM829 250h1v3h-1zM228 351h3v1h-3zM229 350h1v3h-1zM328 351h3v1h-3zM329 350h1v3h-1zM428 351h3v1h-3zM429 350h1v3h-1zM528 351h3v1h-3zM529 350h1v3h-1zM628 351h3v1h-3zM629 350h1v3h-1zM728 351h3v1h-3zM729 350h1v3h-1zM828 351h3v1h-3zM829 350h1v3h-1zM228 451h3v1h-3zM229 450h1v3h-1zM328 451h3v1h-3zM329 450h1v3h-1zM428 451h3v1h-3zM429 450h1v3h-1zM528 451h3v1h-3zM529 450h1v3h-1zM628 451h3v1h-3zM629 450h1v3h-1zM728 451h3v1h-3zM729 450h1v3h-1zM828 451h3v1h-3zM829 450h1v3h-1zM228 551h3v1h-3zM229 550h1v3h-1zM328 551h3v1h-3zM329 550h1v3h-1zM428 551h3v1h-3zM429 550h1v3h-1zM528 551h3v1h-3zM529 550h1v3h-1zM628 551h3v1h-3zM629 550h1v3h-1zM728 551h3v1h-3zM729 550h1v3h-1zM828 551h3v1h-3zM829 550h1v3h-1z" fill="#828282" shape-rendering="crispEdges"/>
<path d="M134.5 56.5 H642.5 V71 L633.5 78.5 H134.5 Z" fill="none" stroke="#404040" stroke-width="1"/>
<rect x="932" y="51" width="15" height="550" fill="#f0f0f0" />
<rect x="932" y="68" width="15" height="272" fill="#cdcdcd" />
<rect x="130" y="602" width="801" height="15" fill="#f0f0f0" />
<rect x="146" y="602" width="477" height="15" fill="#cdcdcd" />
<path d="M936.3 62 L939.5 58.4 L942.7 62" fill="none" stroke="#4e4e4e" stroke-width="2.2"/>
<path d="M936.3 590.8 L939.5 594.4 L942.7 590.8" fill="none" stroke="#4e4e4e" stroke-width="2.2"/>
<path d="M139.2 606.3 L135.6 609.5 L139.2 612.7" fill="none" stroke="#4e4e4e" stroke-width="2.2"/>
<path d="M921.3 606.3 L924.9 609.5 L921.3 612.7" fill="none" stroke="#4e4e4e" stroke-width="2.2"/>
<rect x="172" y="94" width="190" height="253" fill="#b4b4b4" />
<rect x="169" y="91" width="191" height="253" fill="#3c3c3c" />
<rect x="170" y="92" width="189" height="251" fill="#e4e2bc" />
<rect x="170" y="197" width="189" height="1" fill="#3c3c3c" />
<rect x="182" y="214" width="157" height="128" fill="#b9b79a" />
<rect x="179" y="211" width="158" height="129" fill="#3c3c3c" />
<rect x="180" y="212" width="156" height="127" fill="#e4e2bc" />
<rect x="180" y="269" width="156" height="1" fill="#3c3c3c" />
<rect x="192" y="289" width="143" height="49" fill="#b9b79a" />
<rect x="189" y="286" width="144" height="50" fill="#3c3c3c" />
<rect x="190" y="287" width="142" height="48" fill="#ffcc99" />
<rect x="190" y="325" width="142" height="1" fill="#3c3c3c" />
<g stroke="#111" stroke-width="1" fill="none"><path d="M347.5 98.5v5M350.5 98.5v3M346.5 99.5 L343.5 101.5M353.5 104.5v4M351.5 104.5 L347 108.5M350.5 105.5v3"/></g>
<rect x="346" y="95.5" width="6" height="3" rx="1" fill="#9ac030" stroke="#111" stroke-width="1"/><rect x="350" y="101.5" width="6" height="3" rx="1" fill="#9ac030" stroke="#111" stroke-width="1"/>
<ellipse cx="342" cy="101.5" rx="1.5" ry="1.1" fill="#1e66b0" stroke="#0a1626" stroke-width=".9"/>
<ellipse cx="346.3" cy="103.6" rx="1.5" ry="1.1" fill="#1e66b0" stroke="#0a1626" stroke-width=".9"/>
<ellipse cx="346.3" cy="108.6" rx="1.5" ry="1.1" fill="#1e66b0" stroke="#0a1626" stroke-width=".9"/>
<ellipse cx="350.3" cy="108.6" rx="1.5" ry="1.1" fill="#1e66b0" stroke="#0a1626" stroke-width=".9"/>
<ellipse cx="354.3" cy="108.6" rx="1.5" ry="1.1" fill="#1e66b0" stroke="#0a1626" stroke-width=".9"/>
<rect x="318" y="219" width="6" height="2" fill="#c9c9d6" />
<rect x="318" y="215" width="2" height="6" fill="#c9c9d6" />
<path d="M319 215.5 H323.5 V220.5" fill="none" stroke="#1a1aa8" stroke-width="1.3"/>
<path d="M321 222 L318.6 225 H320 V228 H324.5 V226.4 H322 V225 H323.4 Z" fill="#6e6e6e"/>
<path d="M324.6 224 V228.4 Q327 230.4 329.4 228.4 V224" fill="#f4f2dc" stroke="#000" stroke-width="1.2"/><ellipse cx="327" cy="223.8" rx="2.4" ry="1.5" fill="#f4f2dc" stroke="#000" stroke-width="1.2"/>
<rect x="314.5" y="290.5" width="13" height="13" fill="#ffd2a2" stroke="#000" stroke-width="1"/><rect x="315" y="291" width="12" height="2" fill="#ffe6c6"/><path d="M314.5 293.5h13" stroke="#000"/>
<circle cx="321" cy="298.6" r="3.6" fill="none" stroke="#6878ee" stroke-width="1" stroke-dasharray="1.6 1.1"/><path d="M320.3 298 L322 299.6" stroke="#444" stroke-width="1"/><circle cx="320.5" cy="298" r=".8" fill="#111"/>
<path d="M16.5 6.5 H27.5 L31.5 10.5 V21.5 H16.5 Z" fill="#dcdcdc" stroke="#808080"/><path d="M27.5 6.5 V10.5 H31.5 Z" fill="#fff" stroke="#808080" stroke-width=".8"/>
<ellipse cx="20.5" cy="9.7" rx="2.1" ry="1.7" fill="#b8ccec" stroke="#222" stroke-width="1"/><path d="M18 12.8h5M20.5 11.4v1.6 L18.4 15.8 M20.5 13 L22.4 15.8 M22 13 L25.6 16.6" fill="none" stroke="#222" stroke-width="1"/>
<path d="M24.3 17.6 L25.9 15.8 H29 L30.6 17.6 L29 19.4 H25.9 Z" fill="#cfe0f6" stroke="#222" stroke-width="1"/>
<defs>
<linearGradient id="hdrV" x1="0" y1="0" x2="0" y2="1"><stop offset="0" stop-color="#f6f6f6"/><stop offset="0.45" stop-color="#dedede"/><stop offset="1" stop-color="#b2b2b2"/></linearGradient>
<linearGradient id="hdrH" x1="0" y1="0" x2="1" y2="0"><stop offset="0" stop-color="#f0f0f0" stop-opacity="0.95"/><stop offset="0.12" stop-color="#f0f0f0" stop-opacity="0.7"/><stop offset="0.45" stop-color="#f0f0f0" stop-opacity="0"/></linearGradient>
<linearGradient id="fold" x1="0" y1="0" x2="0" y2="1"><stop offset="0" stop-color="#f5ee80"/><stop offset="1" stop-color="#fffde6"/></linearGradient>
<linearGradient id="org" x1="0" y1="0" x2="1" y2="1"><stop offset="0" stop-color="#eda660"/><stop offset="1" stop-color="#fdf0e0"/></linearGradient>
<linearGradient id="orgV" x1="0" y1="0" x2="0" y2="1"><stop offset="0" stop-color="#e8a060"/><stop offset="1" stop-color="#fbe2c6"/></linearGradient>
<linearGradient id="yelH" x1="0" y1="0" x2="1" y2="0"><stop offset="0" stop-color="#f3ec7c"/><stop offset="1" stop-color="#fffbd2"/></linearGradient>
<linearGradient id="gryV" x1="0" y1="0" x2="0" y2="1"><stop offset="0" stop-color="#9a9a9a"/><stop offset="1" stop-color="#f4f4f4"/></linearGradient>
<linearGradient id="curG" x1="0" y1="0" x2="1" y2="0"><stop offset="0" stop-color="#b0b0b0"/><stop offset="1" stop-color="#ffffff"/></linearGradient>
</defs>
<rect x="6" y="53" width="120" height="16" fill="url(#hdrV)" />
<rect x="6" y="53" width="120" height="15" fill="url(#hdrH)" />
<rect x="6" y="92" width="120" height="16" fill="url(#hdrV)" />
<rect x="6" y="92" width="120" height="15" fill="url(#hdrH)" />
<rect x="6" y="311" width="120" height="14" fill="url(#hdrV)" />
<rect x="6" y="311" width="120" height="13" fill="url(#hdrH)" />
<path d="M7.5 58.5V56.5H13.5V58.5" fill="#f2c27c" stroke="#505050"/>
<rect x="7.5" y="58.5" width="13" height="8" fill="url(#fold)" stroke="#505050"/>
<path d="M7.5 97.5V95.5H13.5V97.5" fill="#f2c27c" stroke="#505050"/>
<rect x="7.5" y="97.5" width="13" height="8" fill="url(#fold)" stroke="#505050"/>
<rect x="6" y="69" width="24" height="20" fill="#0a80e0" />
<rect x="7" y="70" width="22" height="18" fill="#b8dcfa" />
<path d="M14.5 72.5 V82.5 L17 80 L19.5 85.5 L21 84.8 L18.6 79.5 H21.5 Z" fill="url(#curG)" stroke="#404040" stroke-width="1"/>
<path d="M18 80.5l1 2M19 82.5l1 2" stroke="#333" stroke-width="1.6" stroke-dasharray="1.2 1"/>
<rect x="35.5" y="73.5" width="12" height="12" fill="none" stroke="#333" stroke-width="1.2" stroke-dasharray="2.6 1.6"/>
<rect x="41.5" y="75.5" width="4" height="3" fill="#ddd" stroke="#444"/><rect x="37.5" y="80.5" width="4" height="3" fill="#ddd" stroke="#444"/><path d="M43.5 79v3h-2" fill="none" stroke="#444"/>
<path d="M64.5 74 Q64.5 72.5 66.5 72.5 Q68.5 72.5 68.5 74 V81 H64.5Z" fill="url(#gryV)" stroke="#505050"/>
<path d="M63.5 81.5 H69.5 L73 84 H60 Z" fill="#d8d8d8" stroke="#606060" stroke-width=".8"/>
<rect x="59" y="84" width="15" height="2" fill="#3c3c3c" />
<path d="M89.5 71.5 L86 75.5 H88 V77.5 H83.5 V79.5 H95.5 V77.5 H91 V75.5 H93 Z" fill="#f0f0f0" stroke="#454b4b" stroke-width="1"/>
<path d="M83 80.5h13v1.6h-13z M85.5 83h8l-4 4.3z" fill="#454b4b"/><rect x="87.5" y="82" width="4" height="1.5" fill="#454b4b"/>
<path d="M107 71h13v1.8h-13z M111.5 72.8h4v1.7h-4z M109.3 74.3h8.4l-4.2 4.2z" fill="#454b4b"/>
<path d="M113.5 79.5 L110 82.5 H112 V84.5 H107.5 V86.5 H119.5 V84.5 H115 V82.5 H117 Z" fill="#f0f0f0" stroke="#454b4b" stroke-width="1"/>
<rect x="6" y="325" width="120" height="20" fill="#0078d7" />
<rect x="7" y="326" width="118" height="18" fill="#cce8ff" />
<path d="M116 117h8l-4 4z" fill="#000"/>
<path d="M116 137h8l-4 4z" fill="#000"/>
<path d="M116 157h8l-4 4z" fill="#000"/>
<path d="M116 177h8l-4 4z" fill="#000"/>
<path d="M116 277h8l-4 4z" fill="#000"/>
<path d="M60.5 451h12l-6 6z" fill="#444"/>
<path d="M10.5 114.5 H21.5 L24.5 117.5 V122.5 H10.5 Z" fill="#f8f0b0" stroke="#404040"/><path d="M21.5 114.5V117.5H24.5" fill="none" stroke="#404040"/><path d="M12 117.5h8M12 119.5h10" stroke="#404040"/>
<rect x="15.5" y="152.5" width="8" height="7" fill="#f8f0b0" stroke="#404040"/><path d="M17 155.5h5M17 157.5h5" stroke="#404040"/><path d="M15 160.5 L10 166" stroke="#404040" stroke-dasharray="2 1.2"/>
<circle cx="21" cy="174.5" r="3" fill="#f0f0f0" stroke="#404040"/><path d="M21 171.5v6M18 174.5h6" stroke="#404040" stroke-width=".9"/><path d="M18.7 176.8 L11 185.5" stroke="#404040"/>
<path d="M10.5 204.5 L22.5 193" stroke="#3a5fd0" stroke-width="1.4" stroke-dasharray="4 1.4" fill="none"/><path d="M17.5 192.5 H23.5 V198.5" stroke="#3a5fd0" stroke-width="1.2" fill="none"/>
<rect x="10" y="212" width="14" height="12" fill="#20364c"/><rect x="11" y="213" width="12" height="10" fill="#8fc4ea"/><path d="M11 217 Q14 214 17 216 T23 215 V219 H11Z" fill="#eaf4fb"/><rect x="11" y="219" width="12" height="4" fill="#2f6f73"/><path d="M11 219 L15 217.5 L19 219.5 L23 218 V220 H11Z" fill="#3d7f8e"/>
<rect x="12.5" y="234.5" width="12" height="11" fill="#fff" stroke="#7a7a7a"/><rect x="14.5" y="237.5" width="4" height="3" fill="#fff" stroke="#333"/><rect x="19.5" y="241.5" width="3" height="2.5" fill="#fff" stroke="#333"/><path d="M18.5 239.5h2.5v2" fill="none" stroke="#333"/>
<path d="M9.5 233.5 Q17 227 24.5 233.5 Q17 238.5 9.5 233.5Z" fill="#fff" stroke="#333" stroke-width=".9"/><circle cx="17" cy="233" r="2.6" fill="#1c50c8"/><circle cx="17" cy="233" r="1" fill="#0a1440"/>
<rect x="10.5" y="251.5" width="13" height="13" fill="#fff" stroke="#808080"/>
<rect x="12" y="253" width="3" height="3" fill="#cc1010" />
<path d="M16 254.5h6" stroke="#111" stroke-width="1.2"/>
<rect x="12" y="257" width="3" height="3" fill="#f0a818" />
<path d="M16 258.5h6" stroke="#111" stroke-width="1.2"/>
<rect x="12" y="261" width="3" height="3" fill="#1a9a8a" />
<path d="M16 262.5h6" stroke="#111" stroke-width="1.2"/>
<path d="M10 278.5h15" stroke="#333" stroke-dasharray="3 1"/>
<path d="M10 300.5h13.5" stroke="#333"/><path d="M14.5 297.5v6l5-3z" fill="#333"/>
<rect x="10.5" y="330.5" width="14" height="9" fill="url(#org)" stroke="#404040"/>
<rect x="9.5" y="348.5" width="15" height="14" fill="url(#orgV)" stroke="#404040"/><path d="M9.5 356.5h15M9.5 359.5h15" stroke="#404040"/>
<rect x="13.5" y="369.5" width="10" height="12" fill="url(#yelH)" stroke="#404040"/><rect x="11.5" y="371.5" width="4" height="2.6" fill="#f6f08c" stroke="#404040"/><rect x="11.5" y="376.5" width="4" height="2.6" fill="#f6f08c" stroke="#404040"/>
<path d="M10.5 400.5 L22.5 389" stroke="#3a5fd0" stroke-width="1.4" stroke-dasharray="4 1.4" fill="none"/><path d="M17.5 388.5 H23.5 V394.5" stroke="#3a5fd0" stroke-width="1.2" fill="none"/>
<path d="M10.5 420.5 L23 409" stroke="#3a5fd0" stroke-width="1.2" fill="none"/><path d="M17.5 408.5 H23.5 V414.5" stroke="#3a5fd0" stroke-width="1.2" fill="none"/>
<g transform="translate(11 426) scale(1.3)"><rect x="2.5" y="0.5" width="4" height="13" fill="#9fb83a" stroke="#000"/><rect x="0.5" y="3.5" width="3" height="2" fill="#9fb83a" stroke="#000"/><rect x="0.5" y="8.5" width="3" height="2" fill="#9fb83a" stroke="#000"/><path d="M7 1.5h3.5M7 7.5h4M7 12.5h3.6" stroke="#000"/><rect x="10.5" y="0.5" width="3" height="2" fill="#9fb83a" stroke="#000"/><ellipse cx="12.2" cy="6.8" rx="1.3" ry="2.15" fill="#ececec" stroke="#000" stroke-width="1.25"/><circle cx="12.2" cy="13.1" r="1.4" fill="#ececec" stroke="#000" stroke-width="1.25"/></g>
<g transform="translate(100 7) scale(1.0)"><rect x="2.5" y="0.5" width="4" height="13" fill="#9fb83a" stroke="#000"/><rect x="0.5" y="3.5" width="3" height="2" fill="#9fb83a" stroke="#000"/><rect x="0.5" y="8.5" width="3" height="2" fill="#9fb83a" stroke="#000"/><path d="M7 1.5h3.5M7 7.5h4M7 12.5h3.6" stroke="#000"/><rect x="10.5" y="0.5" width="3" height="2" fill="#9fb83a" stroke="#000"/><ellipse cx="12.2" cy="6.8" rx="1.3" ry="2.15" fill="#ececec" stroke="#000" stroke-width="1.25"/><circle cx="12.2" cy="13.1" r="1.4" fill="#ececec" stroke="#000" stroke-width="1.25"/></g>
<g transform="translate(475 60) scale(1.0)"><rect x="2.5" y="0.5" width="4" height="13" fill="#9fb83a" stroke="#000"/><rect x="0.5" y="3.5" width="3" height="2" fill="#9fb83a" stroke="#000"/><rect x="0.5" y="8.5" width="3" height="2" fill="#9fb83a" stroke="#000"/><path d="M7 1.5h3.5M7 7.5h4M7 12.5h3.6" stroke="#000"/><rect x="10.5" y="0.5" width="3" height="2" fill="#9fb83a" stroke="#000"/><ellipse cx="12.2" cy="6.8" rx="1.3" ry="2.15" fill="#ececec" stroke="#000" stroke-width="1.25"/><circle cx="12.2" cy="13.1" r="1.4" fill="#ececec" stroke="#000" stroke-width="1.25"/></g>
<path d="M77.5 336.5 V352.5 L81 349.2 L83.6 355 L85.6 354.1 L83.1 348.5 H88.5 Z" fill="#fff" stroke="#000" stroke-width="1" stroke-linejoin="miter"/>
<defs>
<linearGradient id="pasteG" x1="0" y1="0" x2="1" y2="0"><stop offset="0" stop-color="#b8b8b8"/><stop offset="0.55" stop-color="#ffffff"/><stop offset="1" stop-color="#f4f4f4"/></linearGradient>
<linearGradient id="disG" x1="0" y1="0" x2="1" y2="1"><stop offset="0" stop-color="#9c9c9c"/><stop offset="1" stop-color="#b0b0b0"/></linearGradient>
<radialGradient id="lens" cx="0.4" cy="0.35" r="0.7"><stop offset="0" stop-color="#ffffff"/><stop offset="1" stop-color="#e4e4e4"/></radialGradient>
</defs>
<rect x="57" y="31" width="3" height="1" fill="#b2b2b2"/>
<rect x="57" y="33" width="3" height="1" fill="#b2b2b2"/>
<rect x="57" y="35" width="3" height="1" fill="#b2b2b2"/>
<rect x="57" y="37" width="3" height="1" fill="#b2b2b2"/>
<rect x="57" y="39" width="3" height="1" fill="#b2b2b2"/>
<rect x="57" y="41" width="3" height="1" fill="#b2b2b2"/>
<rect x="57" y="43" width="3" height="1" fill="#b2b2b2"/>
<rect x="57" y="45" width="3" height="1" fill="#b2b2b2"/>
<rect x="92" y="31" width="3" height="1" fill="#b2b2b2"/>
<rect x="92" y="33" width="3" height="1" fill="#b2b2b2"/>
<rect x="92" y="35" width="3" height="1" fill="#b2b2b2"/>
<rect x="92" y="37" width="3" height="1" fill="#b2b2b2"/>
<rect x="92" y="39" width="3" height="1" fill="#b2b2b2"/>
<rect x="92" y="41" width="3" height="1" fill="#b2b2b2"/>
<rect x="92" y="43" width="3" height="1" fill="#b2b2b2"/>
<rect x="92" y="45" width="3" height="1" fill="#b2b2b2"/>
<rect x="193" y="31" width="3" height="1" fill="#b2b2b2"/>
<rect x="193" y="33" width="3" height="1" fill="#b2b2b2"/>
<rect x="193" y="35" width="3" height="1" fill="#b2b2b2"/>
<rect x="193" y="37" width="3" height="1" fill="#b2b2b2"/>
<rect x="193" y="39" width="3" height="1" fill="#b2b2b2"/>
<rect x="193" y="41" width="3" height="1" fill="#b2b2b2"/>
<rect x="193" y="43" width="3" height="1" fill="#b2b2b2"/>
<rect x="193" y="45" width="3" height="1" fill="#b2b2b2"/>
<rect x="392" y="31" width="3" height="1" fill="#b2b2b2"/>
<rect x="392" y="33" width="3" height="1" fill="#b2b2b2"/>
<rect x="392" y="35" width="3" height="1" fill="#b2b2b2"/>
<rect x="392" y="37" width="3" height="1" fill="#b2b2b2"/>
<rect x="392" y="39" width="3" height="1" fill="#b2b2b2"/>
<rect x="392" y="41" width="3" height="1" fill="#b2b2b2"/>
<rect x="392" y="43" width="3" height="1" fill="#b2b2b2"/>
<rect x="392" y="45" width="3" height="1" fill="#b2b2b2"/>
<rect x="531" y="31" width="3" height="1" fill="#b2b2b2"/>
<rect x="531" y="33" width="3" height="1" fill="#b2b2b2"/>
<rect x="531" y="35" width="3" height="1" fill="#b2b2b2"/>
<rect x="531" y="37" width="3" height="1" fill="#b2b2b2"/>
<rect x="531" y="39" width="3" height="1" fill="#b2b2b2"/>
<rect x="531" y="41" width="3" height="1" fill="#b2b2b2"/>
<rect x="531" y="43" width="3" height="1" fill="#b2b2b2"/>
<rect x="531" y="45" width="3" height="1" fill="#b2b2b2"/>
<rect x="632" y="31" width="3" height="1" fill="#b2b2b2"/>
<rect x="632" y="33" width="3" height="1" fill="#b2b2b2"/>
<rect x="632" y="35" width="3" height="1" fill="#b2b2b2"/>
<rect x="632" y="37" width="3" height="1" fill="#b2b2b2"/>
<rect x="632" y="39" width="3" height="1" fill="#b2b2b2"/>
<rect x="632" y="41" width="3" height="1" fill="#b2b2b2"/>
<rect x="632" y="43" width="3" height="1" fill="#b2b2b2"/>
<rect x="632" y="45" width="3" height="1" fill="#b2b2b2"/>
<path d="M10 38 L17.5 30 L21 33.5 L19.2 35.2 H24 V40.8 H19.2 L21 42.5 L17.5 46 Z" fill="#989898"/>
<path d="M46 38 L38.5 30 L35 33.5 L36.8 35.2 H32 V40.8 H36.8 L35 42.5 L38.5 46 Z" fill="#989898"/>
<g fill="#fff" stroke="#303030" stroke-width="1.3"><path d="M66.6 35 V31.8 H69.6 L70.4 32.8 H72.2 V35 Z"/><path d="M68.5 35 V44 H73 M68.5 39 H73" fill="none"/><path d="M73.2 40.4 V37.2 H76.2 L77 38.2 H78.8 V40.4 Z"/><path d="M73.2 45.4 V42.2 H76.2 L77 43.2 H78.8 V45.4 Z"/></g>
<path d="M105.5 31.5 H112.5 L115.5 34.5 V43.5 H105.5 Z" fill="url(#disG)" stroke="#8e8e8e" stroke-width=".8"/>
<path d="M101.5 33.5 H108.5 L111.5 36.5 V45.5 H101.5 Z" fill="url(#disG)" stroke="#8e8e8e" stroke-width=".8"/><path d="M108.5 33.5V36.5H111.5" fill="#c0c0c0" stroke="#8e8e8e" stroke-width=".8"/>
<rect x="124.5" y="33.5" width="11" height="12" rx="1.8" fill="url(#pasteG)" stroke="#383838" stroke-width="1.1"/>
<path d="M127.5 35.6 V33.4 L129 31.4 H131 L132.5 33.4 V35.6 Z" fill="#1f5bbd" stroke="#2a2a34" stroke-width=".9"/><rect x="128.2" y="33" width="3.6" height="1" fill="#6ea4ea"/>
<rect x="146" y="33.2" width="13" height="3.6" rx="1" fill="#999"/><path d="M150.8 33.6 L152.5 30.8 L154.2 33.6Z" fill="#999"/><rect x="147" y="36.8" width="11" height="9.2" fill="#9c9c9c"/><path d="M150 38.5v6M152.5 38.5v6M155 38.5v6" stroke="#898989" stroke-width="1"/>
<rect x="167" y="31" width="10" height="10" fill="#9e9e9e"/><path d="M170.3 32v8M173.7 32v8M168 34.3h8M168 37.6h8" stroke="#b0b0b0" stroke-width=".7"/>
<rect x="171.2" y="35" width="9.8" height="2.7" fill="#929292"/><rect x="172" y="37.5" width="8" height="7.5" fill="#949494"/><rect x="173.2" y="38.8" width="5.6" height="5" fill="#a2a2a2"/><path d="M175 39v4.6M177 39v4.6" stroke="#8c8c8c" stroke-width=".9"/>
<g fill="none" stroke="#383838" stroke-width="1"><path d="M208.5 33v1.5 M206.5 36 L208.5 34 L211.5 36 M206.5 39v3 M205.4 39.2 L202.6 42 M211.5 39v3 M212.6 39.2 L215.4 42"/><g fill="#ffffff"><rect x="207.5" y="30.5" width="2" height="2"/><rect x="205.5" y="36.5" width="2" height="2"/><rect x="210.5" y="36.5" width="2" height="2"/><rect x="201.5" y="42.5" width="2" height="2"/><rect x="205.5" y="42.5" width="2" height="2"/><rect x="210.5" y="42.5" width="2" height="2"/><rect x="214.5" y="42.5" width="2" height="2"/></g></g>
<path d="M226.5 37h6l-3 3.3z" fill="#000"/>
<path d="M264.6 37h6l-3 3.3z" fill="#000"/>
<g stroke="#383838" stroke-width="1" fill="none"><path d="M245.5 32v4M244 33.5h3M239.5 38.5h4M241 37v3M245.5 41v4.5M244 43.5h3M248 38.5h4M250.5 37v3"/></g>
<rect x="243.6" y="36.6" width="3.8" height="3.8" fill="#f39a3c" stroke="#5a3a1a" stroke-width="1"/><rect x="248.6" y="40.6" width="4" height="4" fill="#7fd68c" stroke="#2c6b3a" stroke-width="1.2"/><rect x="250" y="42" width="1.5" height="1.5" fill="#e6ffe6"/>
<path d="M281 42.5 L290 33.5" stroke="#8f8f8f" stroke-width="1.1"/>
<rect x="279.0" y="41.5" width="3" height="3" fill="#8f8f8f" />
<rect x="289.0" y="31.5" width="3" height="3" fill="#8f8f8f" />
<path d="M302.5 42.5 V33.5 H311" stroke="#8f8f8f" stroke-width="1.2" fill="none"/>
<rect x="301.0" y="41.5" width="3" height="3" fill="#8f8f8f" />
<rect x="301.0" y="32.0" width="3" height="3" fill="#8f8f8f" />
<rect x="310.0" y="32.0" width="3" height="3" fill="#8f8f8f" />
<path d="M324.5 34.5 H334 L324.5 43.5" stroke="#8f8f8f" stroke-width="1.2" fill="none"/>
<rect x="323.0" y="33.0" width="3" height="3" fill="#8f8f8f" />
<rect x="332.5" y="33.0" width="3" height="3" fill="#8f8f8f" />
<rect x="323.0" y="42.0" width="3" height="3" fill="#8f8f8f" />
<path d="M346.5 43 Q346.5 33.5 356 33.5" stroke="#8f8f8f" stroke-width="1.2" fill="none"/>
<rect x="345.0" y="42.0" width="3" height="3" fill="#8f8f8f" />
<rect x="355.0" y="32.0" width="3" height="3" fill="#8f8f8f" />
<path d="M368.5 43.5 L378.5 33.5" stroke="#8f8f8f" stroke-width="1.2"/><path d="M366 34.5h5M376 43.2h5" stroke="#8f8f8f" stroke-width="1.6"/>
<rect x="367.0" y="42.0" width="3" height="3" fill="#8f8f8f" />
<rect x="377.0" y="32.0" width="3" height="3" fill="#8f8f8f" />
<path d="M400.2 40.5 L404.3 33.2 Q403.8 30.8 406 31 Q407.6 31.2 408 32.6 L416 38.3 V41 L414.8 41.4 H403.2 Z" fill="#a0a0a0"/><circle cx="405.8" cy="33.6" r="1" fill="#ececec"/><path d="M407.5 36 L409 38 L407.5 40 L406 38Z" fill="#949494"/><circle cx="412.6" cy="40.5" r=".8" fill="#f4f4f4"/><rect x="403.5" y="41.7" width="11" height="4" fill="#a8a8a8" stroke="#8a8a8a"/>
<path d="M425.5 37h6l-3 3.3z" fill="#a6a6a6"/>
<rect x="438.5" y="33.5" width="8" height="9.5" fill="#a8a8a8" stroke="#8e8e8e"/><rect x="441.5" y="37.5" width="11" height="8" fill="#a0a0a0" stroke="#8e8e8e"/><path d="M447.5 30.5h4.5v4.5M450 33 L452 35.4 L454 33" fill="none" stroke="#8e8e8e" stroke-width="1.2"/>
<rect x="460.5" y="33.5" width="8" height="9.5" fill="#a8a8a8" stroke="#8e8e8e"/><rect x="463.5" y="37.5" width="9" height="8" fill="#a0a0a0" stroke="#8e8e8e"/><path d="M475.5 35.5h-4v-4.5M469.6 33 L471.5 30.6 L473.4 33" fill="none" stroke="#8e8e8e" stroke-width="1.2"/>
<rect x="483" y="30.5" width="9.5" height="6.5" fill="#a2a2a2"/><rect x="483" y="38.5" width="9.5" height="7" fill="#a2a2a2"/><path d="M490.5 32.5 V43 L493 41 L495 45.5 L496.7 44.8 L494.8 40.6 H498 Z" fill="#9a9a9a" stroke="#8a8a8a" stroke-width=".6"/>
<path d="M505 34.5 L508 31.2 H514.5 L517 34 V39 L511 43.5 H505 Z" fill="#a2a2a2"/><path d="M505.5 35 L511 37.5 L516.5 34.5" stroke="#b6b6b6" fill="none"/>
<path d="M515 40.5 L520 35.5" stroke="#8e8e8e" stroke-width="2.2" stroke-linecap="round"/><path d="M508.8 41 Q510 38 513.5 38.6 L516.4 41.6 Q516 45.6 511.5 45.4 Q508.8 44.5 508.8 41Z" fill="#8f8f8f"/>
<rect x="540.5" y="35.5" width="9" height="5.5" fill="#a8a8a8" stroke="#8e8e8e"/><path d="M552.5 31v2M552.5 43v2" stroke="#8e8e8e"/><path d="M550.4 34.2 L552.5 37 L554.6 34.2 M552.5 33v3.6 M550.4 41.8 L552.5 39 L554.6 41.8 M552.5 39.4v3.6" fill="none" stroke="#8e8e8e" stroke-width="1"/>
<rect x="563" y="33" width="12" height="9" fill="#a4a4a4" stroke="#8e8e8e" stroke-width=".8"/><path d="M565 36h8M565 39h8" stroke="#bcbcbc" stroke-width="1" stroke-dasharray="2 1"/>
<rect x="585" y="32" width="12" height="11" fill="#a0a0a0"/><path d="M585 37.5h12" stroke="#989898" stroke-width=".8"/>
<rect x="607" y="33.5" width="12" height="8.5" fill="#a4a4a4"/><rect x="614.5" y="39.5" width="3" height="3" fill="#b8b8b8" stroke="#8e8e8e" stroke-width=".9"/>
<path d="M650.3 40.2 L655.3 45" stroke="#0e2f86" stroke-width="2.1" stroke-linecap="round"/>
<circle cx="646.5" cy="36.4" r="4.9" fill="url(#lens)" stroke="#666" stroke-width="1"/>
<rect x="644.2" y="34.2" width="4.4" height="4.4" fill="#fff" stroke="#000" stroke-width="1.4"/>
<path d="M672.1 40 L677.4 45.2" stroke="#9a9a9a" stroke-width="2" stroke-linecap="round"/>
<circle cx="668.6" cy="36.4" r="5" fill="#a4a4a4" stroke="#b4b4b4" stroke-width="1"/>
<path d="M694.1999999999999 40.2 L699.1999999999999 45" stroke="#0e2f86" stroke-width="2.1" stroke-linecap="round"/>
<circle cx="690.4" cy="36.4" r="4.9" fill="url(#lens)" stroke="#666" stroke-width="1"/>
<path d="M687.6 36.5h5.8M690.5 33.6v5.8" stroke="#000" stroke-width="1.4"/>
<path d="M716.4 40.2 L721.4 45" stroke="#0e2f86" stroke-width="2.1" stroke-linecap="round"/>
<circle cx="712.6" cy="36.4" r="4.9" fill="url(#lens)" stroke="#666" stroke-width="1"/>
<path d="M709.8 36.2h5.6" stroke="#000" stroke-width="1.4"/>
<rect x="725" y="27" width="70" height="22" fill="#abadb3" />
<rect x="726" y="28" width="68" height="20" fill="#fff" />
<path d="M781.5 36.5 L785.5 40.5 L789.5 36.5" fill="none" stroke="#555" stroke-width="1"/>
<text id="t0" x="35.3" y="18" font-size="11" textLength="53.00" lengthAdjust="spacing" fill="#000">Description</text>
<text id="t1" x="119" y="18" font-size="11" font-weight="bold" textLength="134.00" lengthAdjust="spacing" fill="#000">SqlQueries Components</text>
<text id="t2" x="140.5" y="71" font-size="12" font-weight="bold" textLength="225.00" lengthAdjust="spacing" fill="#000">package Component Diagram Version 2</text>
<text id="t3" x="371" y="71" font-size="12" textLength="94.00" lengthAdjust="spacing" fill="#000">Component View</text>
<text id="t4" x="467" y="71" font-size="12" fill="#000">[</text>
<text id="t5" x="494" y="71" font-size="12" textLength="136.30" lengthAdjust="spacing" fill="#000">SqlQueries Components</text>
<text id="t6" x="634.5" y="71" font-size="12" fill="#000">]</text>
<text id="t7" x="205.5" y="106" font-size="12" textLength="97.00" lengthAdjust="spacing" fill="#1a1aff">«E2EComposite»</text>
<text id="t8" x="199.3" y="123.5" font-size="12" font-weight="bold" textLength="110.00" lengthAdjust="spacing" fill="#000">SqlQueriesExample</text>
<text id="t9" x="176.5" y="143" font-size="12" fill="#000">{category = "E2E Examples",</text>
<text id="t10" x="176.5" y="159" font-size="12" fill="#000">controlPort = 21021,</text>
<text id="t11" x="176.5" y="175" font-size="12" fill="#000">killJVMThreadsOnShutdown,</text>
<text id="t12" x="176.5" y="191" font-size="12" fill="#000">wsdlPerService}</text>
<text id="t13" x="193.8" y="226" font-size="12" textLength="107.80" lengthAdjust="spacing" fill="#1a1aff">«E2ESOAPService»</text>
<text id="t14" x="196" y="244" font-size="12" font-weight="bold" textLength="104.70" lengthAdjust="spacing" fill="#000">SqlQueriesService</text>
<text id="t15" x="233" y="263" font-size="12" fill="#000">{port = 11021}</text>
<text id="t16" x="192.8" y="301" font-size="12" textLength="115.80" lengthAdjust="spacing" fill="#1a1aff">«E2ESOAPPortType»</text>
<text id="t17" x="208.5" y="319" font-size="12" font-weight="bold" textLength="85.50" lengthAdjust="spacing" fill="#000">SqlQueriesPort</text>
<text id="t18" x="25.7" y="65" font-size="11" textLength="24.90" lengthAdjust="spacing" fill="#000">Tools</text>
<text id="t19" x="25.7" y="104" font-size="11" textLength="40.60" lengthAdjust="spacing" fill="#000">Common</text>
<text id="t20" x="6.2" y="322" font-size="11" textLength="117.80" lengthAdjust="spacing" fill="#000">Component Diagram El...</text>
<text id="t21" x="28.6" y="122" font-size="11" textLength="22.70" lengthAdjust="spacing" fill="#000">Note</text>
<text id="t22" x="28.6" y="142" font-size="11" textLength="42.80" lengthAdjust="spacing" fill="#000">Text Box</text>
<text id="t23" x="28.6" y="162" font-size="11" textLength="33.10" lengthAdjust="spacing" fill="#000">Anchor</text>
<text id="t24" x="28.6" y="182" font-size="11" textLength="61.30" lengthAdjust="spacing" fill="#000">Containment</text>
<text id="t25" x="28.6" y="202" font-size="11" textLength="59.40" lengthAdjust="spacing" fill="#000">Dependency</text>
<text id="t26" x="28.6" y="222" font-size="11" textLength="62.50" lengthAdjust="spacing" fill="#000">Image Shape</text>
<text id="t27" x="28.6" y="242" font-size="11" textLength="87.20" lengthAdjust="spacing" fill="#000">Diagram Overview</text>
<text id="t28" x="28.6" y="262" font-size="11" textLength="76.40" lengthAdjust="spacing" fill="#000">Diagram Legend</text>
<text id="t29" x="28.6" y="282" font-size="11" textLength="79.60" lengthAdjust="spacing" fill="#000">Horizontal Sep...</text>
<text id="t30" x="28.6" y="302" font-size="11" textLength="86.80" lengthAdjust="spacing" fill="#000">Conveyed Infor...</text>
<text id="t31" x="28.6" y="339" font-size="11" textLength="35.90" lengthAdjust="spacing" fill="#000">Artifact</text>
<text id="t32" x="28.6" y="359" font-size="11" textLength="24.80" lengthAdjust="spacing" fill="#000">Class</text>
<text id="t33" x="28.6" y="379" font-size="11" textLength="55.00" lengthAdjust="spacing" fill="#000">Component</text>
<text id="t34" x="28.6" y="399" font-size="11" textLength="64.60" lengthAdjust="spacing" fill="#000">Manifestation</text>
<text id="t35" x="28.6" y="419" font-size="11" textLength="67.50" lengthAdjust="spacing" fill="#000">Generalization</text>
<text id="t36" x="34" y="439" font-size="11" textLength="87.60" lengthAdjust="spacing" fill="#000">Edit Component...</text>
<text id="t37" x="9.5" y="141" font-size="9.5" textLength="15.00" lengthAdjust="spacing" fill="#505050">abc</text>
<text id="t38" x="10" y="295" font-size="5.5" font-weight="bold" textLength="14.50" lengthAdjust="spacing" fill="#444">INFO</text>
<text id="t39" x="17.5" y="338" font-size="7" font-weight="bold" textLength="5.50" lengthAdjust="spacing" fill="#333">A</text>
<text id="t40" x="18.2" y="402.6" font-size="7.5" textLength="5.60" lengthAdjust="spacing" fill="#111">M</text>
<text id="t41" x="665.3" y="38.8" font-size="5.5" font-weight="bold" textLength="6.70" lengthAdjust="spacing" fill="#b8b8b8">1:1</text>
<text id="t42" x="728.8" y="42" font-size="11" textLength="27.70" lengthAdjust="spacing" fill="#000">100%</text>
</svg>
</body></html>
